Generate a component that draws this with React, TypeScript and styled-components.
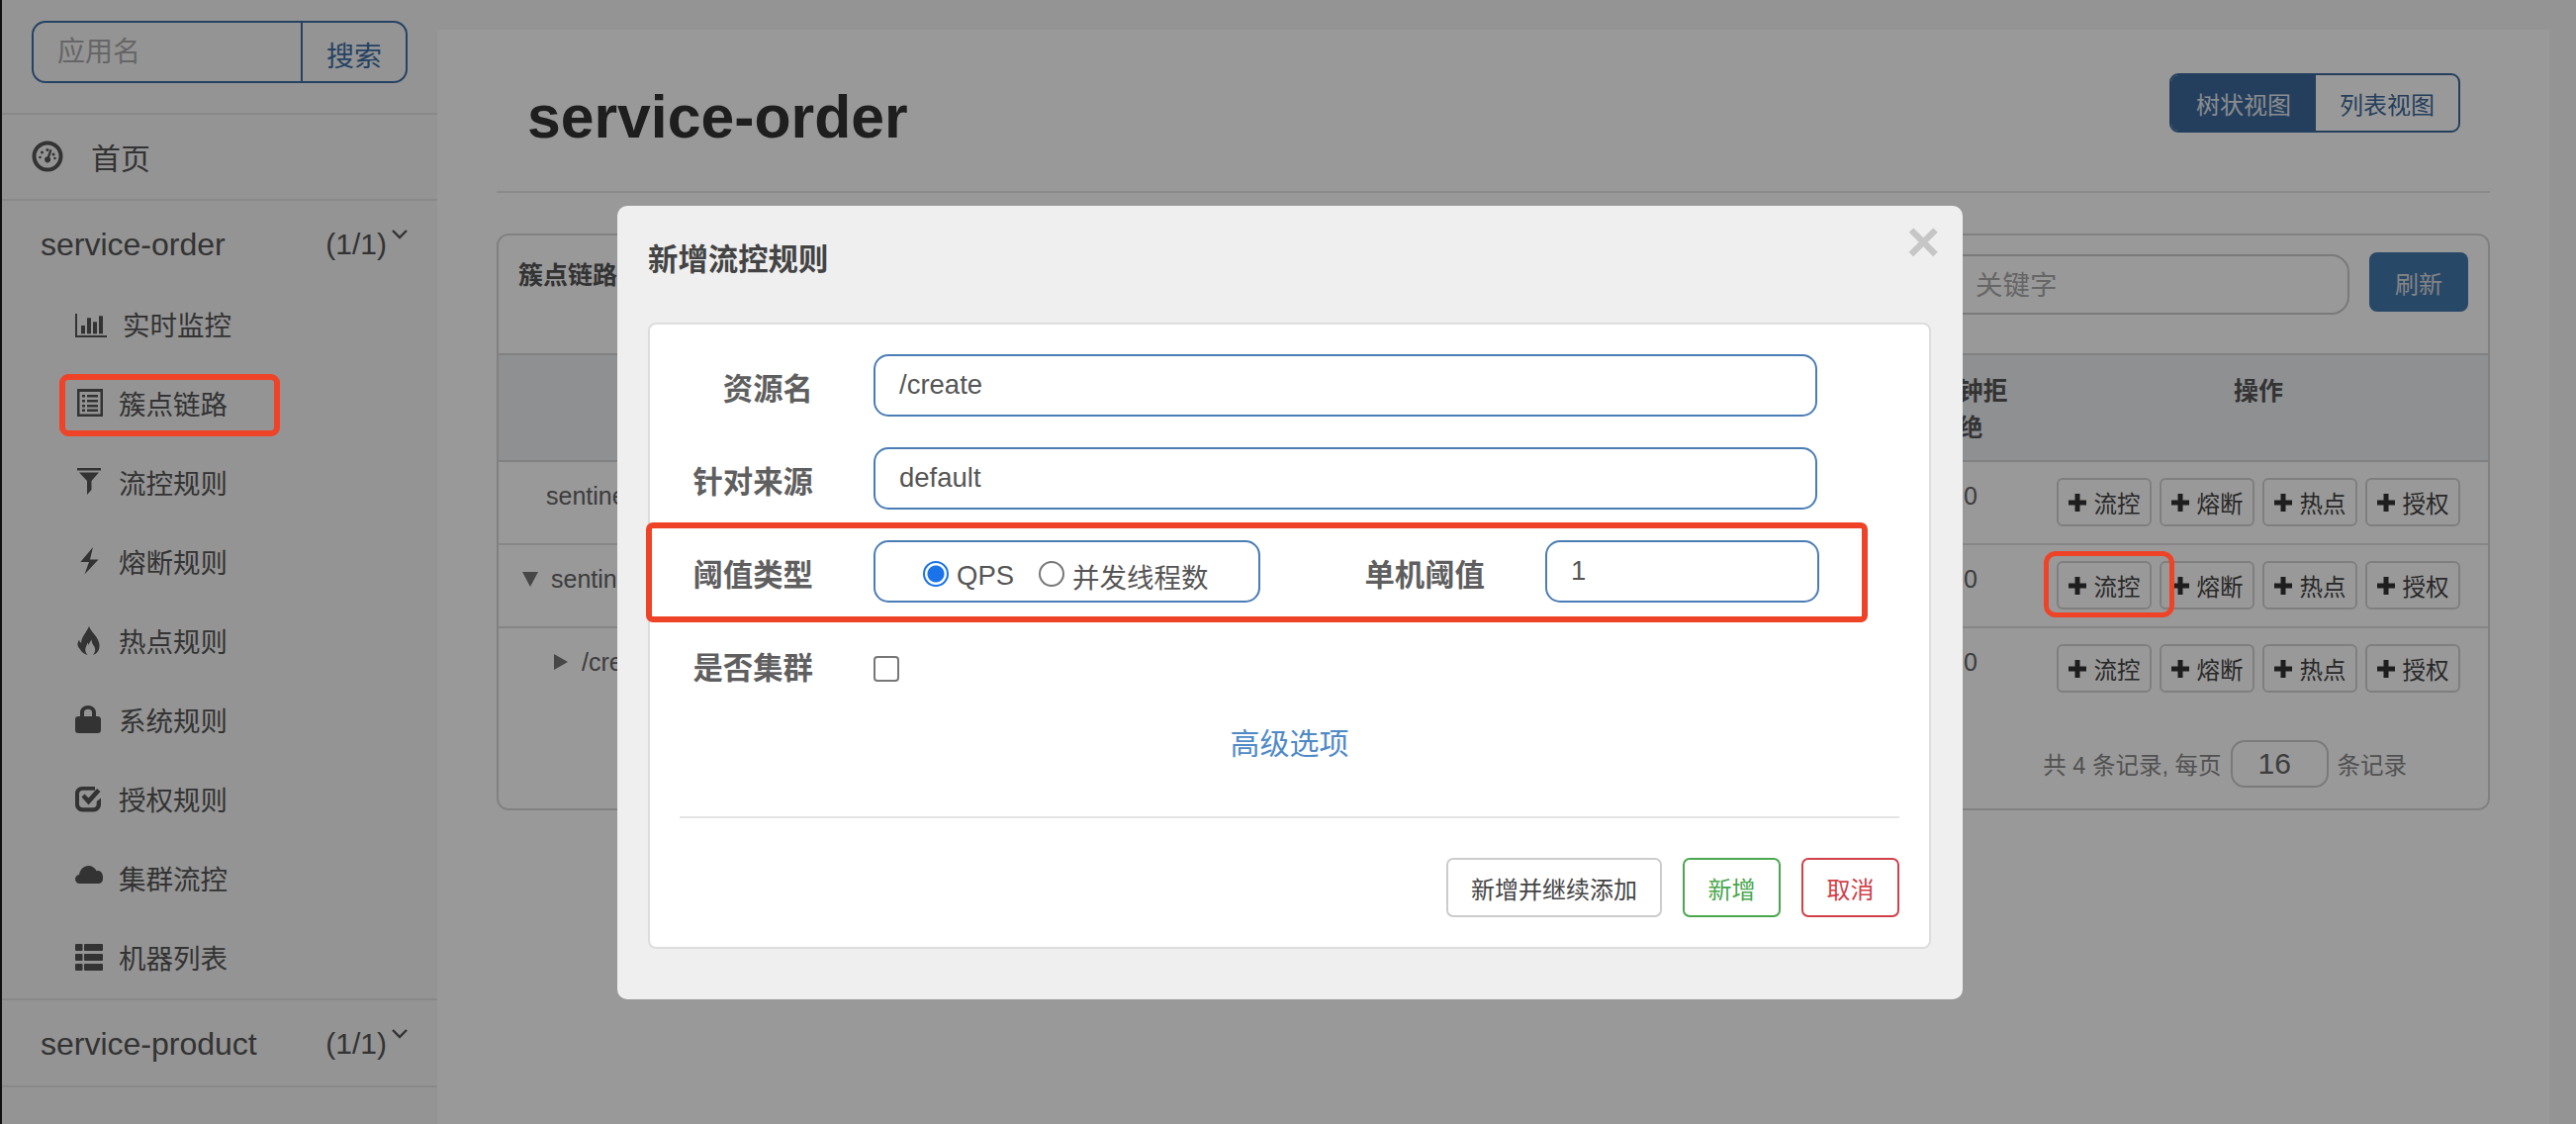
import React from "react";
import styled, { createGlobalStyle } from "styled-components";

const FONT = `"Liberation Sans", "Noto Sans CJK SC", sans-serif`;

const Global = createGlobalStyle`
  html, body { margin: 0; padding: 0; }
  body { width: 2604px; height: 1136px; overflow: hidden; font-family: ${FONT}; background: #f7f7f7; }
  * { box-sizing: border-box; }
`;

const Page = styled.div`
  position: relative;
  display: flex;
  width: 2604px;
  height: 1136px;
  overflow: hidden;
  background: #f7f7f7;
  border-left: 2px solid #111;
`;

/* ---------- sidebar ---------- */
const Sidebar = styled.aside`
  flex: 0 0 440px;
  color: #555;
`;
const SearchWrap = styled.div`
  height: 116px;
  padding: 21px 30px 0 30px;
  border-bottom: 2px solid #e4e4e4;
`;
const SearchBox = styled.div`
  display: flex;
  width: 380px;
  height: 63px;
  border: 2px solid #3f6fa5;
  border-radius: 14px;
  overflow: hidden;
`;
const SearchInput = styled.input`
  flex: 1;
  min-width: 0;
  border: 0;
  outline: 0;
  background: transparent;
  padding: 0 0 0 24px;
  font: 28px ${FONT};
  &::placeholder { color: #aaa; opacity: 1; }
`;
const SearchButton = styled.button`
  flex: 0 0 106px;
  border: 0;
  border-left: 2px solid #3f6fa5;
  background: transparent;
  color: #3f6fa5;
  font: 28px ${FONT};
  padding: 4px 0 0;
`;
const HomeRow = styled.div`
  display: flex;
  align-items: center;
  height: 87px;
  padding: 0 0 2px 30px;
  gap: 28px;
  font-size: 30px;
  border-bottom: 2px solid #e4e4e4;
`;
const HomeIcon = styled.span`
  display: flex;
  width: 32px;
  svg { fill: #555; display: block; }
`;
const GroupHead = styled.div<{ $last?: boolean }>`
  display: flex;
  align-items: center;
  height: ${(p) => (p.$last ? 90 : 84)}px;
  margin-top: ${(p) => (p.$last ? 2 : 0)}px;
  padding: ${(p) => (p.$last ? 2 : 4)}px 0 0 39px;
  font-size: 32px;
  border-top: ${(p) => (p.$last ? "2px solid #e4e4e4" : "0")};
  border-bottom: ${(p) => (p.$last ? "2px solid #e4e4e4" : "0")};
`;
const GroupName = styled.span`
  flex: 1;
`;
const GroupCount = styled.span`
  font-size: 30px;
  margin-right: 5px;
`;
const Chevron = styled.svg`
  width: 16px;
  height: 10px;
  margin: -20px 30px 0 0;
  fill: none;
  stroke: #555;
  stroke-width: 2.4;
`;
const NavItem = styled.div`
  display: flex;
  align-items: center;
  height: 80px;
  padding-left: 74px;
  font-size: 27.5px;
`;
const NavIcon = styled.span<{ $w?: number }>`
  display: flex;
  align-items: center;
  justify-content: flex-start;
  width: ${(p) => p.$w ?? 44}px;
  svg { fill: #555; display: block; }
`;

/* ---------- main ---------- */
const Main = styled.main`
  flex: 0 0 2134px;
  margin-top: 30px;
  background: #fff;
  padding: 0 60px;
  color: #444;
`;
const Header = styled.header`
  display: flex;
  justify-content: space-between;
  height: 165px;
  border-bottom: 2px solid #e6e6e6;
  padding: 44px 30px 0 31px;
`;
const Title = styled.h1`
  margin: 2px 0 0;
  font: bold 60.7px/84px ${FONT};
  color: #333;
`;
const Toggle = styled.div`
  display: flex;
  height: 60px;
  width: 294px;
  border: 2px solid #3d6a9c;
  border-radius: 9px;
  overflow: hidden;
`;
const ToggleItem = styled.div<{ $active?: boolean }>`
  flex: ${(p) => (p.$active ? "0 0 146px" : 1)};
  display: flex;
  align-items: center;
  justify-content: center;
  font-size: 24px;
  background: ${(p) => (p.$active ? "#3d6a9c" : "transparent")};
  color: ${(p) => (p.$active ? "#e4e8ee" : "#3d6a9c")};
`;
const Panel = styled.section`
  margin-top: 41px;
  height: 583px;
  border: 2px solid #d8d8d8;
  border-radius: 12px;
  overflow: hidden;
`;
const PanelHead = styled.div`
  display: flex;
  align-items: flex-start;
  justify-content: space-between;
  height: 121px;
  padding: 17px 20px 0 20px;
  border-bottom: 2px solid #d8d8d8;
`;
const PanelTitle = styled.div`
  font: bold 25px/46px ${FONT};
  color: #555;
`;
const PanelTools = styled.div`
  display: flex;
  gap: 20px;
`;
const KeywordInput = styled.input`
  width: 700px;
  height: 61px;
  margin-top: 2px;
  border: 2px solid #ccc;
  border-radius: 18px;
  outline: 0;
  padding: 2px 0 0 320px;
  font: 27.5px ${FONT};
  background: #fff;
  &::placeholder { color: #aaa; opacity: 1; }
`;
const RefreshButton = styled.button`
  width: 100px;
  height: 60px;
  border: 0;
  border-radius: 8px;
  background: #4478ae;
  color: #ddd;
  font: 24px ${FONT};
`;
const Table = styled.table`
  width: 100%;
  table-layout: fixed;
  border-collapse: collapse;
  font-size: 25px;
`;
const Th = styled.th`
  height: 107px;
  padding: 18px 14px 0;
  vertical-align: top;
  font: bold 25px/37px ${FONT};
  text-align: center;
  background: #eef0f3;
  color: #555;
  border-bottom: 2px solid #d8d8d8;
`;
const Tr = styled.tr<{ $line?: boolean }>`
  height: 84px;
  border-bottom: ${(p) => (p.$line ? "2px solid #e0e0e0" : "0")};
`;
const NameCell = styled.td<{ $indent: number }>`
  padding: 5px 0 0 ${(p) => p.$indent}px;
  vertical-align: top;
  line-height: 58px;
  color: #666;
`;
const Triangle = styled.span<{ $dir: "down" | "right" }>`
  display: inline-block;
  vertical-align: 1px;
  width: 0;
  height: 0;
  margin-right: ${(p) => (p.$dir === "down" ? 13 : 14)}px;
  ${(p) =>
    p.$dir === "down"
      ? "border-left: 8.5px solid transparent; border-right: 8.5px solid transparent; border-top: 15px solid #777;"
      : "border-top: 8px solid transparent; border-bottom: 8px solid transparent; border-left: 14px solid #777;"}
`;
const NumCell = styled.td`
  padding-top: 5px;
  vertical-align: top;
  line-height: 58px;
  text-align: center;
  color: #666;
`;
const ActionCell = styled.td`
  padding-top: 16px;
  vertical-align: top;
`;
const ActionGroup = styled.div`
  display: flex;
  justify-content: center;
  gap: 8px;
`;
const ActionButton = styled.button`
  display: flex;
  align-items: center;
  justify-content: center;
  gap: 8px;
  width: 96px;
  height: 49px;
  padding: 0;
  border: 2px solid #d4d4d4;
  border-radius: 6px;
  background: #fff;
  color: #444;
  font: 23.5px ${FONT};
  svg { fill: #333; }
`;
const Pager = styled.div`
  display: flex;
  align-items: center;
  justify-content: flex-end;
  gap: 9px;
  margin-top: 30px;
  padding-right: 82px;
  font-size: 23.5px;
  color: #888;
`;
const PageSize = styled.input`
  width: 99px;
  height: 48px;
  border: 2px solid #ccc;
  border-radius: 14px;
  outline: 0;
  padding: 0 0 0 26px;
  font: 30px ${FONT};
  color: #666;
  background: #fff;
`;

/* ---------- modal ---------- */
const Dim = styled.div`
  position: absolute;
  inset: 0;
  background: rgba(0, 0, 0, 0.4);
`;
const Modal = styled.div`
  position: absolute;
  left: 622px;
  top: 208px;
  width: 1360px;
  height: 802px;
  padding: 0 31px;
  background: #efefef;
  border-radius: 10px;
`;
const ModalHead = styled.div`
  display: flex;
  align-items: flex-start;
  justify-content: space-between;
  height: 118px;
  padding-top: 32px;
`;
const ModalTitle = styled.h3`
  margin: 0;
  font: bold 30.4px/44px ${FONT};
  color: #444;
`;
const CloseGlyph = styled.span`
  margin: -26px -8px 0 0;
  font: bold 58px/60px ${FONT};
  color: #c6c6c6;
`;
const Card = styled.div`
  width: 1297px;
  height: 633px;
  padding: 14px 30px 0 30px;
  background: #fff;
  border: 2px solid #ddd;
  border-radius: 8px;
`;
const FormRow = styled.div`
  display: flex;
  align-items: center;
  height: 94px;
`;
const Label = styled.label<{ $w: number }>`
  flex: 0 0 ${(p) => p.$w}px;
  text-align: right;
  font: bold 30.4px/40px ${FONT};
  color: #5f5f5f;
  padding-top: 8px;
`;
const TextInput = styled.input<{ $w: number }>`
  width: ${(p) => p.$w}px;
  height: 63px;
  margin-left: 61px;
  padding: 0 0 0 24px;
  border: 2px solid #4a7db5;
  border-radius: 15px;
  outline: 0;
  font: 27.5px ${FONT};
  color: #555;
  background: #fff;
`;
const RadioBox = styled.div`
  display: flex;
  align-items: center;
  width: 391px;
  height: 63px;
  margin-left: 61px;
  padding: 6px 0 0 48px;
  border: 2px solid #4a7db5;
  border-radius: 15px;
  font-size: 27.5px;
  color: #555;
`;
const RadioDot = styled.input`
  appearance: none;
  width: 26px;
  height: 26px;
  margin: 0 8px 0 0;
  border-radius: 50%;
  border: 2px solid #777;
  background: #fff;
  &:checked {
    border-color: #1a73e8;
    background: radial-gradient(circle, #1a73e8 0 8px, #fff 9px);
  }
`;
const RadioText = styled.span<{ $gap?: number }>`
  margin: 4px ${(p) => p.$gap ?? 0}px 0 0;
`;
const Checkbox = styled.input`
  appearance: none;
  width: 26px;
  height: 26px;
  margin: 10px 0 0 61px;
  border: 2px solid #777;
  border-radius: 4px;
  background: #fff;
`;
const AdvancedLink = styled.a`
  display: block;
  margin-top: 2px;
  height: 105px;
  line-height: 64px;
  text-align: center;
  font-size: 30px;
  color: #4f8ac7;
`;
const ModalRule = styled.hr`
  margin: 0;
  border: 0;
  border-top: 2px solid #e5e5e5;
`;
const ModalActions = styled.div`
  display: flex;
  justify-content: flex-end;
  gap: 21px;
  margin-top: 40px;
`;
const ModalButton = styled.button<{ $tone: string; $w: number; $text: string }>`
  width: ${(p) => p.$w}px;
  height: 60px;
  border: 2px solid ${(p) => p.$tone};
  border-radius: 7px;
  background: #fff;
  color: ${(p) => p.$text};
  font: 24px ${FONT};
`;
const RedBox = styled.div<{ $x: number; $y: number; $w: number; $h: number; $r: number; $s: number }>`
  position: absolute;
  left: ${(p) => p.$x}px;
  top: ${(p) => p.$y}px;
  width: ${(p) => p.$w}px;
  height: ${(p) => p.$h}px;
  border: ${(p) => p.$s}px solid #ef4327;
  border-radius: ${(p) => p.$r}px;
`;

/* ---------- icons ---------- */
const Gauge = () => (
  <svg width="32" height="32" viewBox="0 0 32 32">
    <path fillRule="evenodd" d="M16 .5a15.500 15.500 0 1 0 0 31a15.500 15.500 0 0 0 0-31zm0 4a11.500 11.500 0 1 1 0 23a11.500 11.500 0 0 1 0-23z" />
    <circle cx="10.500" cy="12" r="1.500" />
    <circle cx="16" cy="9.500" r="1.500" />
    <circle cx="22" cy="14" r="1.500" />
    <circle cx="8.500" cy="17" r="1.300" />
    <circle cx="23.500" cy="18" r="1.300" />
    <path d="M18.500 9l2 .6-2.300 7.400a3.100 3.100 0 1 1-2.400-.8z" />
  </svg>
);
const Bars = () => (
  <svg width="32" height="28" viewBox="0 -4 32 28">
    <path d="M0 0h2v22h30v2H0z" />
    <rect x="6" y="12" width="4" height="8.300" />
    <rect x="12" y="4.300" width="4" height="16" />
    <rect x="18" y="8.300" width="4" height="12" />
    <rect x="24" y="2.300" width="4" height="18" />
  </svg>
);
const ListAlt = () => (
  <svg width="28" height="28" viewBox="-2 0 28 28">
    <path fillRule="evenodd" d="M0 0h26v28H0zM2.500 3v22.500h21V3z" />
    <path d="M5 6h3v2.600H5zM10 6h11v2.600H10zM5 11h3v2.600H5zM10 11h11v2.600H10zM5 16h3v2.600H5zM10 16h11v2.600H10zM5 20.500h3v2.600H5zM10 20.500h11v2.600H10z" />
  </svg>
);
const Filter = () => (
  <svg width="26" height="28" viewBox="-2 0 26 28">
    <path d="M0 0h24v2.500H0zM2 4.500h20L14.500 13v9L10 27V13z" />
  </svg>
);
const Bolt = () => (
  <svg width="24" height="28" viewBox="-5 0 24 28">
    <path d="M13 0L.3 15H9L4.500 27.500 18.500 12.500H10z" />
  </svg>
);
const Fire = () => (
  <svg width="26" height="29" viewBox="-2 0 26 29">
    <path d="M12 0c1.500 4.500 5 7 7.500 11 2.300 3.800 3.800 7 2.800 11.200-.8 3.300-3 5.800-6.300 6.800 2.300-2.300 2.800-5.600 1.500-8.200-.7-1.400-1.700-2.400-2.300-3.800-.5-1.300-.5-2.200-.3-3.600-1.700 1.500-2.700 3.400-3.200 5.600-.4-.9-.7-1.500-1.500-2.200-.2 2.600-1.600 3.800-1.900 6.200-.3 2.400.7 4.500 2.300 6-3-.8-6-2.500-7.600-5.700C-.4 20 .1 16.600 2 13.800c.5 1.500 1 2.400 2.200 3.300C3.800 11.500 8.500 7.500 12 0z" />
  </svg>
);
const Lock = () => (
  <svg width="26" height="28" viewBox="0 0 26 28">
    <path fillRule="evenodd" d="M5 11V7c0-3.900 3.500-7 8-7s8 3.100 8 7v4h2c1.700 0 3 1.300 3 3v11c0 1.700-1.300 3-3 3H3c-1.700 0-3-1.300-3-3V14c0-1.700 1.300-3 3-3zm4 0h8V7c0-2-1.800-3.200-4-3.200S9 5 9 7z" />
  </svg>
);
const Check = () => (
  <svg width="27" height="27" viewBox="0 0 27 27">
    <path d="M7 1h13v3.800H7.500C5.800 4.800 4 6.300 4 8v11c0 1.700 1.800 3.200 3.500 3.200h11c1.700 0 3.200-1.500 3.200-3.200v-3l4.300-3.500V19c0 4.100-3.400 7.500-7.500 7.500H7.500C3.400 26.500 0 23.100 0 19V8c0-3.900 3.100-7 7-7z" />
    <path d="M6.500 11.500l3-3 4 4L22 3l3.500 3-12 13.500z" />
  </svg>
);
const Cloud = () => (
  <svg width="28" height="24" viewBox="0 0 28 24">
    <path d="M4.500 18C2 18 0 16 0 13.500S1.800 9.300 4 9C4.800 3.800 8.800 0 13.500 0c3.500 0 6.500 2 8 5.200.6-.2 1-.2 1.500-.2 2.800 0 5 2.600 5 6.300v2.200c0 2.500-2 4.500-4.500 4.500z" />
  </svg>
);
const ThList = () => (
  <svg width="28" height="27" viewBox="0 0 28 27">
    <path d="M1 0h5.500a1 1 0 0 1 1 1v5a1 1 0 0 1-1 1H1a1 1 0 0 1-1-1V1a1 1 0 0 1 1-1zM10 0h17a1 1 0 0 1 1 1v5a1 1 0 0 1-1 1H10a1 1 0 0 1-1-1V1a1 1 0 0 1 1-1zM1 10h5.500a1 1 0 0 1 1 1v5a1 1 0 0 1-1 1H1a1 1 0 0 1-1-1v-5a1 1 0 0 1 1-1zM10 10h17a1 1 0 0 1 1 1v5a1 1 0 0 1-1 1H10a1 1 0 0 1-1-1v-5a1 1 0 0 1 1-1zM1 20h5.500a1 1 0 0 1 1 1v5a1 1 0 0 1-1 1H1a1 1 0 0 1-1-1v-5a1 1 0 0 1 1-1zM10 20h17a1 1 0 0 1 1 1v5a1 1 0 0 1-1 1H10a1 1 0 0 1-1-1v-5a1 1 0 0 1 1-1z" />
  </svg>
);
const Plus = () => (
  <svg width="18" height="18" viewBox="0 0 18 18">
    <path d="M6.500 0h5v6.500H18v5h-6.500V18h-5v-6.500H0v-5h6.500z" />
  </svg>
);
const ChevronDown = () => (
  <Chevron viewBox="0 0 16 10">
    <path d="M1 1l7 7 7-7" />
  </Chevron>
);

const NAV: [React.ReactNode, string, number?][] = [
  [<Bars key="a" />, "实时监控", 48],
  [<ListAlt key="b" />, "簇点链路"],
  [<Filter key="c" />, "流控规则"],
  [<Bolt key="d" />, "熔断规则"],
  [<Fire key="e" />, "热点规则"],
  [<Lock key="f" />, "系统规则"],
  [<Check key="g" />, "授权规则"],
  [<Cloud key="h" />, "集群流控"],
  [<ThList key="i" />, "机器列表"],
];

const COLS = [839, 118, 118, 118, 118, 118, 118, 464];
const ROWS: { name: string; indent: number; dir?: "down" | "right"; line: boolean }[] = [
  { name: "sentinel_default_context", indent: 48, line: true },
  { name: "sentinel_spring_web_context", indent: 24, dir: "down", line: true },
  { name: "/create", indent: 56, dir: "right", line: false },
];

const Actions = () => (
  <ActionGroup>
    {["流控", "熔断", "热点", "授权"].map((t) => (
      <ActionButton key={t}>
        <Plus />
        {t}
      </ActionButton>
    ))}
  </ActionGroup>
);

export default function App() {
  return (
    <Page>
      <Global />
      <Sidebar>
        <SearchWrap>
          <SearchBox>
            <SearchInput placeholder="应用名" readOnly />
            <SearchButton>搜索</SearchButton>
          </SearchBox>
        </SearchWrap>
        <HomeRow>
          <HomeIcon>
            <Gauge />
          </HomeIcon>
          首页
        </HomeRow>
        <GroupHead>
          <GroupName>service-order</GroupName>
          <GroupCount>(1/1)</GroupCount>
          <ChevronDown />
        </GroupHead>
        {NAV.map(([icon, label, w]) => (
          <NavItem key={label}>
            <NavIcon $w={w}>{icon}</NavIcon>
            {label}
          </NavItem>
        ))}
        <GroupHead $last>
          <GroupName>service-product</GroupName>
          <GroupCount>(1/1)</GroupCount>
          <ChevronDown />
        </GroupHead>
      </Sidebar>

      <Main>
        <Header>
          <Title>service-order</Title>
          <Toggle>
            <ToggleItem $active>树状视图</ToggleItem>
            <ToggleItem>列表视图</ToggleItem>
          </Toggle>
        </Header>
        <Panel>
          <PanelHead>
            <PanelTitle>簇点链路</PanelTitle>
            <PanelTools>
              <KeywordInput placeholder="关键字" readOnly />
              <RefreshButton>刷新</RefreshButton>
            </PanelTools>
          </PanelHead>
          <Table>
            <colgroup>
              {COLS.map((w, i) => (
                <col key={i} width={w} />
              ))}
            </colgroup>
            <thead>
              <tr>
                <Th>资源名</Th>
                <Th>通过QPS</Th>
                <Th>拒绝QPS</Th>
                <Th>并发数</Th>
                <Th>平均RT</Th>
                <Th>分钟通过</Th>
                <Th>分钟拒绝</Th>
                <Th>操作</Th>
              </tr>
            </thead>
            <tbody>
              {ROWS.map((r) => (
                <Tr key={r.name} $line={r.line}>
                  <NameCell $indent={r.indent}>
                    {r.dir && <Triangle $dir={r.dir} />}
                    {r.name}
                  </NameCell>
                  {[0, 1, 2, 3, 4, 5].map((i) => (
                    <NumCell key={i}>0</NumCell>
                  ))}
                  <ActionCell>
                    <Actions />
                  </ActionCell>
                </Tr>
              ))}
            </tbody>
          </Table>
          <Pager>
            <span>共 4 条记录, 每页</span>
            <PageSize defaultValue="16" readOnly />
            <span>条记录</span>
          </Pager>
        </Panel>
      </Main>

      <Dim />

      <Modal>
        <ModalHead>
          <ModalTitle>新增流控规则</ModalTitle>
          <CloseGlyph>×</CloseGlyph>
        </ModalHead>
        <Card>
          <FormRow>
            <Label $w={135}>资源名</Label>
            <TextInput $w={954} defaultValue="/create" readOnly />
          </FormRow>
          <FormRow>
            <Label $w={135}>针对来源</Label>
            <TextInput $w={954} defaultValue="default" readOnly />
          </FormRow>
          <FormRow>
            <Label $w={135}>阈值类型</Label>
            <RadioBox>
              <RadioDot type="radio" name="grade" defaultChecked />
              <RadioText $gap={25}>QPS</RadioText>
              <RadioDot type="radio" name="grade" />
              <RadioText>并发线程数</RadioText>
            </RadioBox>
            <Label $w={227}>单机阈值</Label>
            <TextInput $w={277} defaultValue="1" readOnly />
          </FormRow>
          <FormRow>
            <Label $w={135}>是否集群</Label>
            <Checkbox type="checkbox" />
          </FormRow>
          <AdvancedLink>高级选项</AdvancedLink>
          <ModalRule />
          <ModalActions>
            <ModalButton $tone="#ccc" $text="#444" $w={218}>新增并继续添加</ModalButton>
            <ModalButton $tone="#4aa74f" $text="#4aa74f" $w={99}>新增</ModalButton>
            <ModalButton $tone="#d0414a" $text="#d0414a" $w={99}>取消</ModalButton>
          </ModalActions>
        </Card>
      </Modal>

      <RedBox $x={58} $y={378} $w={223} $h={63} $r={9} $s={6} />
      <RedBox $x={651} $y={528} $w={1235} $h={101} $r={7} $s={6} />
      <RedBox $x={2064} $y={557} $w={132} $h={67} $r={12} $s={5} />
    </Page>
  );
}
